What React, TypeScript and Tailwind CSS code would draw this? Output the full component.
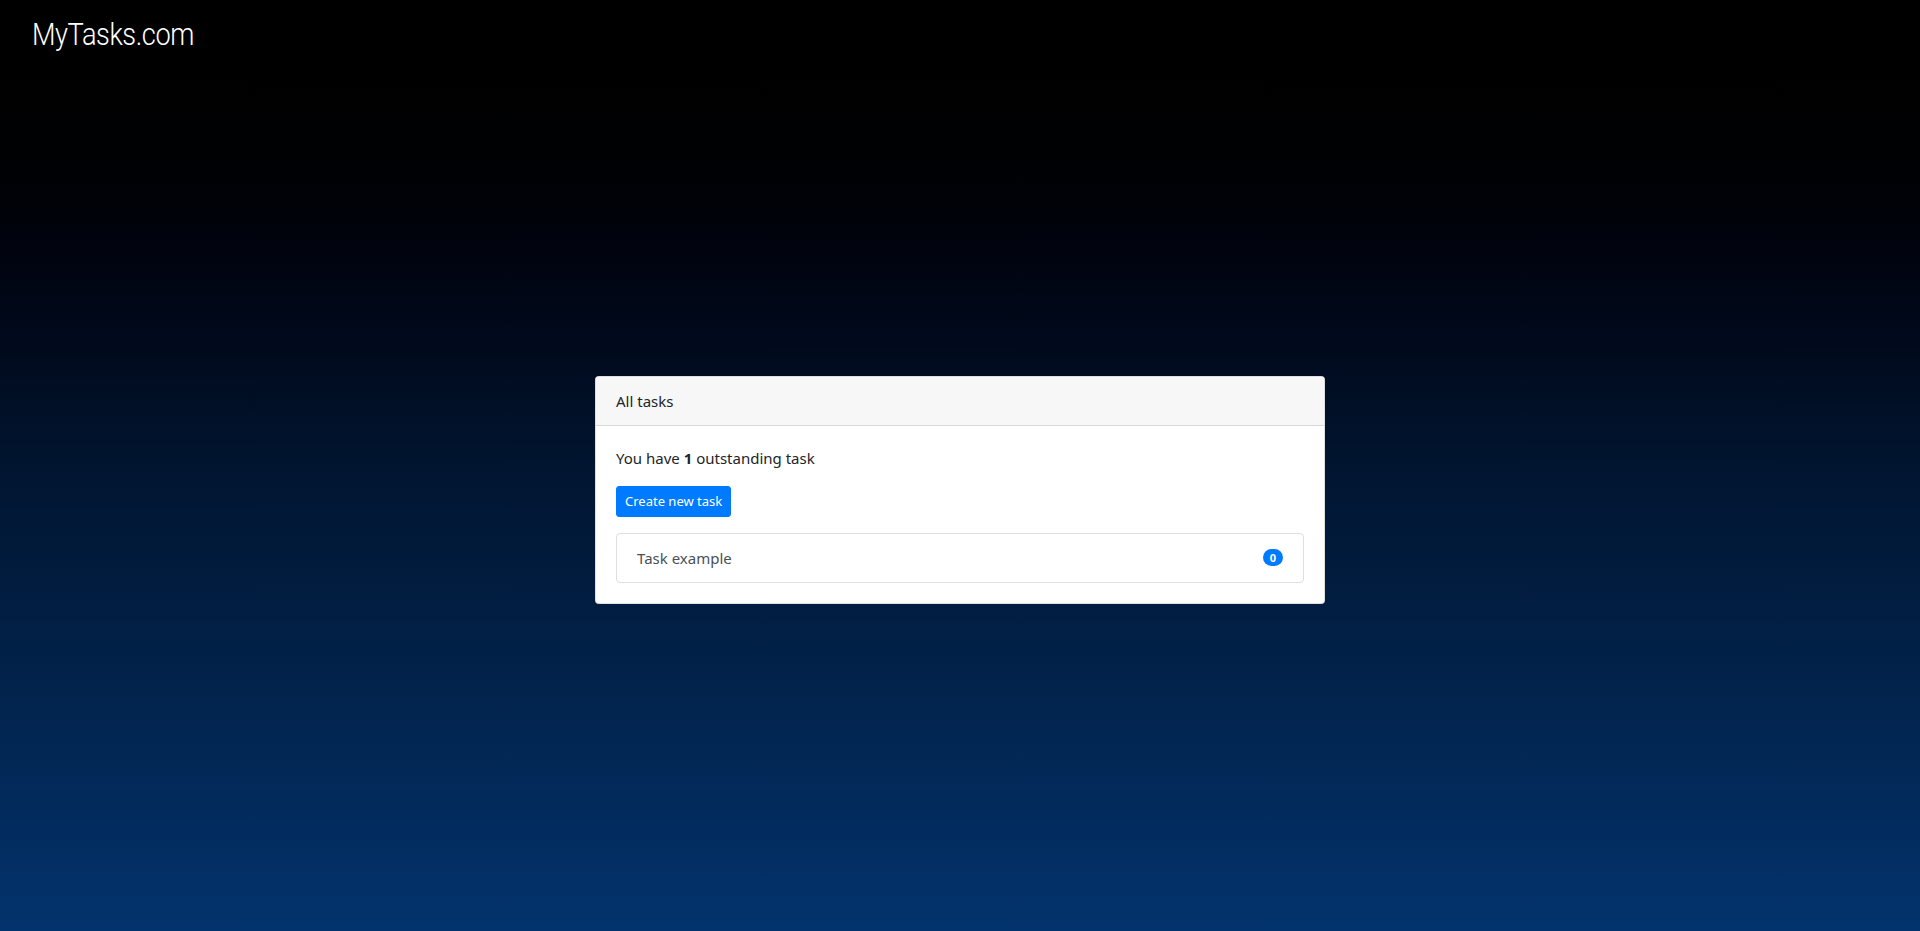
export default function App() {
  return (
    <div className="min-h-[931px] h-screen bg-gradient-to-b from-black via-[#011530] to-[#03336d] flex flex-col font-['Segoe_UI','Noto_Sans',sans-serif] text-[#212529]">
      {/* header */}
      <header className="px-8 pt-[14px] h-[60px]">
        <span className="inline-block origin-left scale-x-[0.85] text-white text-[32px] leading-[40px] font-['Roboto',sans-serif] font-light tracking-[-0.5px] select-none">
          MyTasks.com
        </span>
      </header>

      <main className="flex-1 flex items-center justify-center pb-[12px]">
        <div className="w-[730px] bg-white rounded-[4px] border border-black/[0.125] overflow-hidden">
          <div className="bg-[#f7f7f7] border-b border-black/[0.125] px-5 py-3 text-[15px] leading-6">
            All tasks
          </div>
          <div className="p-5">
            <p className="text-[15px] leading-6">
              You have <b className="font-bold">1</b> outstanding task
            </p>
            <button
              type="button"
              className="mt-4 bg-[#007bff] text-white text-[13px] leading-[21px] px-2 py-1 rounded-[3px] border border-[#007bff]"
            >
              Create new task
            </button>
            <ul className="mt-4 border border-black/[0.125] rounded-[4px]">
              <li className="flex items-center justify-between px-5 py-3 text-[15px] leading-6 text-[#495057]">
                <span>Task example</span>
                <span className="bg-[#007bff] text-white text-[11px] font-bold leading-none rounded-full px-[7px] py-[3px]">
                  0
                </span>
              </li>
            </ul>
          </div>
        </div>
      </main>
    </div>
  )
}
